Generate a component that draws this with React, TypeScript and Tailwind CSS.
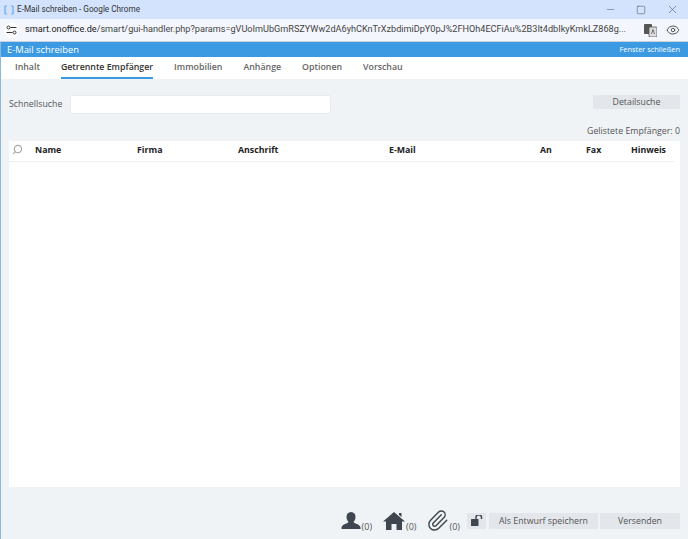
import { Minus, Square, X, Eye, Search, Paperclip } from 'lucide-react';

const TABS = ['Inhalt', 'Getrennte Empfänger', 'Immobilien', 'Anhänge', 'Optionen', 'Vorschau'];
const COLUMNS = ['Name', 'Firma', 'Anschrift', 'E-Mail', 'An', 'Fax', 'Hinweis'];

function Count() {
  return <span className="ml-px self-end text-[9px] leading-[11px] text-[#555]">(0)</span>;
}

export default function App() {
  return (
    <div className="flex h-[539px] w-[688px] flex-col overflow-hidden bg-[#eff3f6] font-['Open_Sans',sans-serif]">
      {/* chrome window */}
      <div className="flex h-[19px] items-center bg-[#d3e3fd] pl-[4px] font-['Roboto',sans-serif]">
        <svg width="10" height="10" viewBox="0 0 10 10" fill="none" stroke="#6aa8e8" strokeWidth="1.2" className="mr-[3px]">
          <path d="M3 1H1.500Q1 1 1 1.500v7q0 .5.5.5H3M7 1h1.500q.5 0 .5.5v7q0 .5-.5.5H7" />
        </svg>
        <span className="text-[8.200px] text-[#333]">E-Mail schreiben - Google Chrome</span>
        <div className="ml-auto flex items-center gap-[20px] pr-[9px] text-[#444]">
          <Minus size={11} strokeWidth={1} />
          <Square size={10} strokeWidth={1.2} />
          <X size={13} strokeWidth={1} />
        </div>
      </div>
      <div className="flex h-[23px] items-center border-b border-[#c9d3e0] bg-[#f3f6fc] pl-[4px] pr-[8px] font-['Roboto',sans-serif]">
        <div className="mr-[6px] flex h-[15px] w-[15px] items-center justify-center rounded-full bg-white">
          <svg width="11" height="10" viewBox="0 0 11 10" fill="none" stroke="#333" strokeWidth="1">
            <path d="M4.500 2.500H10.500M.5 7.500H6.500" />
            <circle cx="2.500" cy="2.500" r="1.500" />
            <circle cx="8.500" cy="7.500" r="1.500" />
          </svg>
        </div>
        <span className="w-[612px] whitespace-nowrap text-[9.150px] text-[#444]">
          <span className="text-[#222]">smart.onoffice.de</span>/smart/gui-handler.php?params=gVUoImUbGmRSZYWw2dA6yhCKnTrXzbdimiDpY0pJ%2FHOh4ECFiAu%2B3It4dbIkyKmkLZ868g...
        </span>
        <div className="ml-auto flex items-center gap-[9px] text-[#444]">
          <svg width="13" height="13" viewBox="0 0 13 13">
            <rect x="0" y="0" width="8" height="10" rx="1" fill="#555" />
            <rect x="5" y="3" width="8" height="10" rx="1" fill="#ddd" stroke="#555" strokeWidth="0.8" />
            <path d="M7.500 10l1.500-4.500 1.500 4.500" fill="none" stroke="#555" strokeWidth="0.8" />
          </svg>
          <Eye size={14} strokeWidth={1.5} />
        </div>
      </div>

      {/* app */}
      <div className="flex flex-1 flex-col border-l border-[#8db8de]">
        <div className="flex h-[15px] items-center justify-between bg-[#3b9ae1] pl-[6px] pr-[8px]">
          <span className="pt-[1px] text-[9.400px] text-white">E-Mail schreiben</span>
          <span className="pt-[1px] text-[7.400px] text-white">Fenster schließen</span>
        </div>
        <div className="flex h-[22px] gap-[21px] bg-white pl-[14px]">
          {TABS.map((t, i) => (
            <div
              key={t}
              className={
                i === 1
                  ? 'h-[22px] border-b-2 border-[#3b9ae1] text-[8.800px] leading-[21px] font-semibold text-[#333]'
                  : 'h-[22px] text-[8.800px] leading-[21px] font-semibold text-[#666]'
              }
            >
              {t}
            </div>
          ))}
        </div>

        <div className="flex flex-1 flex-col pl-[8px] pr-[8px]">
          <div className="mt-[16px] flex items-start">
            <span className="w-[61px] text-[8.800px] leading-[19px] text-[#555]">Schnellsuche</span>
            <div className="h-[19px] w-[261px] rounded-[2px] border border-[#e8ecf0] bg-white" />
            <button className="ml-auto h-[14px] w-[87px] bg-[#e3e6ea] text-[8.800px] leading-[14px] text-[#555]">Detailsuche</button>
          </div>
          <div className="mt-[10px] text-right text-[8.800px] leading-[14px] text-[#555]">Gelistete Empfänger: 0</div>
          <div className="mt-[3px] h-[346px] bg-white">
            <div className="mr-[6px] grid h-[21px] grid-cols-[26px_102px_101px_151px_151px_46px_45px_1fr] items-center border-b border-[#eceff2] pb-[1px] text-[8.800px] font-bold text-[#222]">
              <Search size={11} strokeWidth={2.5} className="ml-[3px] -mt-[3px] -scale-x-100 text-[#a8a8a8]" />
              {COLUMNS.map(c => (
                <span key={c}>{c}</span>
              ))}
            </div>
          </div>
          <div className="mt-[22px] flex items-center justify-end">
            <svg width="20" height="20" viewBox="0 0 20 20" fill="#3f4650">
              <path d="M10 1c3 0 4.500 2.200 4.500 5 0 2.300-1 4-2 5 .2 1.500 6.500 2 7 5.500V18H.5v-1.500c.5-3.500 6.800-4 7-5.500-1-1-2-2.700-2-5 0-2.800 1.500-5 4.500-5z" />
            </svg>
            <Count />
            <svg width="22" height="18" viewBox="0 0 22 18" fill="#3f4650" className="ml-[11px]">
              <path d="M11 0l11 9.500h-3V18h-5.500v-6h-5v6H3V9.500H0zM16 1h2.500v4L16 3z" />
            </svg>
            <Count />
            <Paperclip size={23} strokeWidth={1.5} className="ml-[9px] text-[#3f4650]" />
            <Count />
            <div className="ml-[7px] flex h-[16px] w-[19px] items-center justify-center bg-[#e3e6ea]">
              <svg width="12" height="11" viewBox="0 0 12 11" fill="#3f4650">
                <rect x="0" y="4" width="7.500" height="7" rx="0.5" />
                <path d="M5 4V2.500a2.500 2.500 0 0 1 5.500 0V4" fill="none" stroke="#3f4650" strokeWidth="1.400" />
              </svg>
            </div>
            <button className="ml-[3px] h-[16px] w-[109px] bg-[#e3e6ea] text-[8.800px] leading-[16px] text-[#555]">Als Entwurf speichern</button>
            <button className="ml-[2px] h-[16px] w-[80px] bg-[#e3e6ea] text-[8.800px] leading-[16px] text-[#555]">Versenden</button>
          </div>
        </div>
      </div>
    </div>
  );
}
